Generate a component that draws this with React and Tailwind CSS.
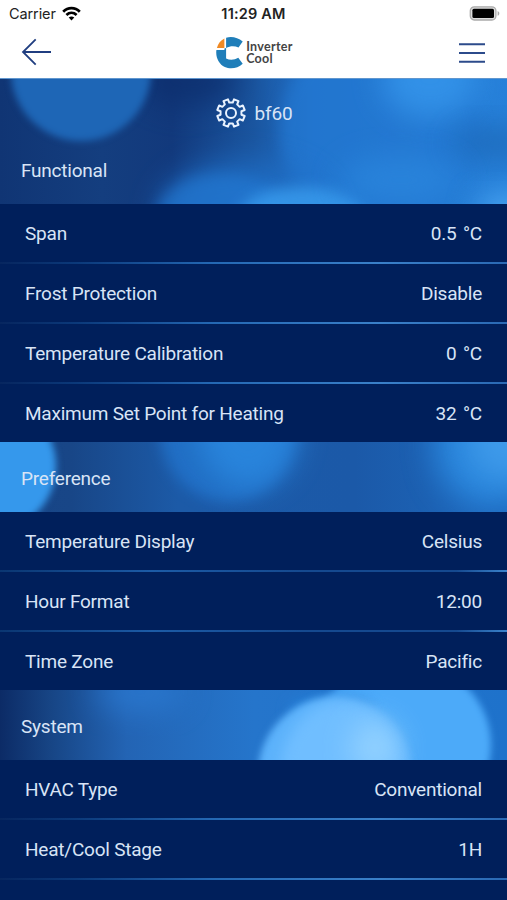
import React from 'react';

const sections = [
  {
    title: 'Functional',
    rows: [
      { label: 'Span', value: '0.5 °C' },
      { label: 'Frost Protection', value: 'Disable' },
      { label: 'Temperature Calibration', value: '0 °C' },
      { label: 'Maximum Set Point for Heating', value: '32 °C' },
    ],
  },
  {
    title: 'Preference',
    rows: [
      { label: 'Temperature Display', value: 'Celsius' },
      { label: 'Hour Format', value: '12:00' },
      { label: 'Time Zone', value: 'Pacific' },
    ],
  },
  {
    title: 'System',
    rows: [
      { label: 'HVAC Type', value: 'Conventional' },
      { label: 'Heat/Cool Stage', value: '1H' },
    ],
  },
];

const gearPath = (() => {
  const points = [];
  for (let i = 0; i < 8; i++) {
    const mid = 22.5 + i * 45;
    [[-13, 10.6], [-10, 14], [10, 14], [13, 10.6]].forEach(([offset, r]) => {
      const a = ((mid + offset) * Math.PI) / 180;
      points.push(`${(r * Math.cos(a)).toFixed(2)} ${(r * Math.sin(a)).toFixed(2)}`);
    });
  }
  return `M${points.join('L')}Z`;
})();

const GearIcon = () => (
  <svg width="32" height="32" viewBox="-16 -16 32 32" fill="none" stroke="#eaf3ff" strokeWidth="2" strokeLinejoin="round">
    <path d={gearPath} />
    <circle r="5" />
  </svg>
);

// Blurred circles of light behind the whole screen
const Backdrop = () => (
  <svg className="absolute inset-0 -z-10" width="507" height="900" viewBox="0 0 507 900">
    <defs>
      <linearGradient id="top" x1="0" x2="1">
        <stop offset="0" stopColor="#103574" />
        <stop offset="0.2" stopColor="#143e7f" />
        <stop offset="0.34" stopColor="#12397c" />
        <stop offset="0.5" stopColor="#1a559f" />
        <stop offset="0.62" stopColor="#2171c9" />
        <stop offset="1" stopColor="#2680d9" />
      </linearGradient>
      <linearGradient id="middle" x1="0" x2="1">
        <stop offset="0" stopColor="#174486" />
        <stop offset="0.14" stopColor="#184687" />
        <stop offset="0.35" stopColor="#1c5aa7" />
        <stop offset="0.7" stopColor="#1b59a8" />
        <stop offset="1" stopColor="#1d69be" />
      </linearGradient>
      <linearGradient id="bottom" x1="0" x2="1">
        <stop offset="0" stopColor="#0c2b66" />
        <stop offset="0.1" stopColor="#174585" />
        <stop offset="0.25" stopColor="#2364b4" />
        <stop offset="0.5" stopColor="#2575cb" />
        <stop offset="1" stopColor="#1e72cb" />
      </linearGradient>
      <linearGradient id="lines" x1="0" x2="1">
        <stop offset="0" stopColor="#07265f" />
        <stop offset="0.15" stopColor="#0b397a" />
        <stop offset="0.42" stopColor="#2468b4" />
        <stop offset="0.75" stopColor="#3a80c9" />
        <stop offset="1" stopColor="#2a69b4" />
      </linearGradient>
      <linearGradient id="dimLines" x1="0" x2="1">
        <stop offset="0" stopColor="#0a3672" />
        <stop offset="0.3" stopColor="#1c5ba6" />
        <stop offset="0.6" stopColor="#15498f" />
        <stop offset="0.9" stopColor="#15498f" />
        <stop offset="1" stopColor="#3b83cc" />
      </linearGradient>
      <filter id="soft" x="-30%" y="-30%" width="160%" height="160%" colorInterpolationFilters="sRGB">
        <feGaussianBlur stdDeviation="3.5" />
      </filter>
      <filter id="softer" x="-40%" y="-40%" width="180%" height="180%" colorInterpolationFilters="sRGB">
        <feGaussianBlur stdDeviation="7" />
      </filter>
      <filter id="haze" x="-60%" y="-60%" width="220%" height="220%" colorInterpolationFilters="sRGB">
        <feGaussianBlur stdDeviation="15" />
      </filter>
      <clipPath id="clipTop"><rect y="79" width="507" height="125" /></clipPath>
      <clipPath id="clipMiddle"><rect y="442" width="507" height="70" /></clipPath>
      <clipPath id="clipBottom"><rect y="690" width="507" height="70" /></clipPath>
    </defs>
    <rect width="507" height="900" fill="url(#lines)" />
    <rect y="512" width="507" height="178" fill="url(#dimLines)" />
    <g clipPath="url(#clipTop)">
      <rect y="79" width="507" height="125" fill="url(#top)" />
      <ellipse cx="190" cy="80" rx="50" ry="26" fill="#0c2d6c" opacity="0.75" filter="url(#haze)" />
      <circle cx="81" cy="71" r="70" fill="#1e66b6" filter="url(#soft)" />
      <circle cx="380" cy="130" r="100" fill="#2378d2" opacity="0.7" filter="url(#softer)" />
      <ellipse cx="245" cy="212" rx="86" ry="52" fill="#2070c8" opacity="0.75" filter="url(#haze)" />
      <ellipse cx="222" cy="218" rx="66" ry="44" fill="#237ad4" opacity="0.6" filter="url(#softer)" />
      <ellipse cx="302" cy="221" rx="66" ry="34" fill="#389aec" opacity="0.85" filter="url(#softer)" />
      <ellipse cx="430" cy="80" rx="48" ry="38" fill="#3494ea" opacity="0.9" filter="url(#haze)" />
      <ellipse cx="495" cy="143" rx="42" ry="17" fill="#1b65b3" opacity="0.7" filter="url(#haze)" />
      <ellipse cx="400" cy="180" rx="60" ry="24" fill="#2b88df" opacity="0.7" filter="url(#haze)" />
      <ellipse cx="507" cy="212" rx="30" ry="18" fill="#4aa6f3" filter="url(#haze)" />
    </g>
    <g clipPath="url(#clipMiddle)">
      <rect y="442" width="507" height="70" fill="url(#middle)" />
      <ellipse cx="228" cy="430" rx="68" ry="72" fill="#2273cb" opacity="0.8" filter="url(#softer)" />
      <ellipse cx="248" cy="430" rx="50" ry="58" fill="#2b8ae2" opacity="0.8" filter="url(#haze)" />
      <circle cx="-10" cy="466" r="66" fill="#3598ec" filter="url(#soft)" />
      <ellipse cx="490" cy="445" rx="56" ry="62" fill="#2a86dc" filter="url(#haze)" />
      <circle cx="506" cy="442" r="38" fill="#4ba7f3" opacity="0.6" filter="url(#haze)" />
    </g>
    <g clipPath="url(#clipBottom)">
      <rect y="690" width="507" height="70" fill="url(#bottom)" />
      <ellipse cx="140" cy="692" rx="45" ry="20" fill="#2c7dd6" opacity="0.7" filter="url(#haze)" />
      <ellipse cx="402" cy="745" rx="89" ry="84" fill="#4caaf9" filter="url(#soft)" />
      <ellipse cx="330" cy="710" rx="42" ry="16" fill="#2581da" opacity="0.7" filter="url(#softer)" />
      <ellipse cx="335" cy="774" rx="77" ry="77" fill="#5cb2fb" filter="url(#soft)" />
      <ellipse cx="342" cy="774" rx="62" ry="73" fill="#70beff" filter="url(#softer)" />
      <ellipse cx="375" cy="748" rx="24" ry="28" fill="#a2daff" opacity="0.7" filter="url(#haze)" />
    </g>
  </svg>
);

const StatusBar = () => (
  <div className="grid h-7 grid-cols-3 items-center pr-[7px] pl-[9px] font-[Inter,sans-serif] text-[14.5px] text-[#222]">
    <div className="flex items-center gap-1.5">
      <span className="tracking-[-0.1px]">Carrier</span>
      <svg className="-mt-0.5" width="19" height="15" viewBox="0 0 19 15" fill="none" stroke="#000" strokeWidth="2.7">
        <path d="M1.2 5.7C5.9.8 13.1.8 17.8 5.7" />
        <path d="M4.4 9C7.4 6.2 11.6 6.2 14.6 9" />
        <path d="M6.7 11.5C8.4 10 10.6 10 12.3 11.5L9.5 14.4Z" fill="#000" stroke="none" />
      </svg>
    </div>
    <span className="-ml-0.5 text-center font-semibold tracking-[0.2px] whitespace-nowrap">11:29 AM</span>
    <svg className="-mt-0.5 justify-self-end" width="31" height="15" viewBox="0 0 31 15">
      <rect x="1.3" y="0.8" width="25.6" height="13.2" rx="4" fill="#ddd" stroke="#aaa" strokeWidth="1.3" />
      <rect x="3.4" y="2.8" width="21.6" height="9.2" rx="1.5" fill="#000" />
      <path d="M28.6 5v4.7c1-.4 1.7-1.2 1.7-2.3S29.6 5.4 28.6 5Z" fill="#aaa" />
    </svg>
  </div>
);

const Logo = () => (
  <div className="flex items-center gap-[3px] pl-[3px]">
    <svg width="27" height="32" viewBox="0 0 27 32">
      <path d="M10.1 .7C15.7 -.9 22 .5 26.7 4.6L22.5 10.5C18.5 8.5 14 8.8 10.1 11Z" fill="#1f7eb9" />
      <path d="M8.4 1.4V11H.9C2 6.5 4.5 3.2 8.4 1.4Z" fill="#f08a24" />
      <path d="M.4 12.9H8.4V11.5L10.1 11V21.5C14 23.5 18.5 23 22.3 20.8L26.7 26.8C22 31.3 14.5 32.7 8.8 30C3 27.2-.6 20.5.4 12.9Z" fill="#1f7eb9" />
    </svg>
    <p className="pt-px font-[Lato,sans-serif] text-[12.5px] leading-[12px] font-bold tracking-[0.3px] text-[#444]">
      Inverter
      <br />
      Cool
    </p>
  </div>
);

const Header = () => (
  <header className="h-[79px] border-b border-[#6096ce] bg-white">
    <StatusBar />
    <div className="grid h-[49px] grid-cols-3 items-center pr-[22px] pl-[21px]">
      <svg className="-mt-0.5" width="31" height="28" viewBox="0 0 31 28" fill="none" stroke="#203e80" strokeWidth="1.8">
        <path d="M30 14H1.8M14.7 1.3L2 14L14.7 26.7" />
      </svg>
      <div className="justify-self-center">
        <Logo />
      </div>
      <svg className="justify-self-end" width="26" height="20" viewBox="0 0 26 20" stroke="#2c4b8b" strokeWidth="2">
        <path d="M0 1.3H26M0 10H26M0 18.7H26" />
      </svg>
    </div>
  </header>
);

const Section = ({ title, rows }) => (
  <section>
    <h2 className="flex h-[70px] items-center pt-0.5 pl-[21px]">{title}</h2>
    <div className="flex flex-col gap-0.5">
      {rows.map((row) => (
        <div key={row.label} className="flex h-[58px] items-center justify-between bg-[#001f5b] px-[25px]">
          <span>{row.label}</span>
          <span className="[word-spacing:2px]">{row.value}</span>
        </div>
      ))}
    </div>
  </section>
);

export default function App() {
  return (
    <div className="relative isolate flex h-[900px] w-[507px] flex-col overflow-hidden font-[Roboto,sans-serif] text-[19px] leading-none font-normal tracking-[-0.22px] text-[#d8e4f6]">
      <Backdrop />
      <Header />
      <div className="flex h-[55px] items-center justify-center gap-2 pt-[13px]">
        <GearIcon />
        <span className="pt-px">bf60</span>
      </div>
      {sections.map((section) => (
        <Section key={section.title} {...section} />
      ))}
      <div className="mt-0.5 flex-1 bg-[#001f5b]" />
    </div>
  );
}
